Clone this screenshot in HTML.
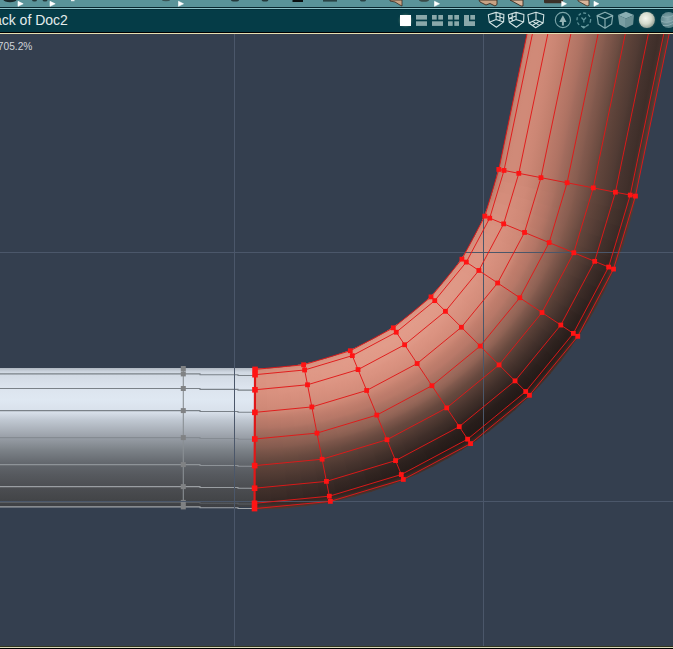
<!DOCTYPE html>
<html><head><meta charset="utf-8">
<style>
html,body{margin:0;padding:0;width:673px;height:649px;overflow:hidden;background:#343f4f;}
svg{position:absolute;left:0;top:0;}
.t{font-family:"Liberation Sans",sans-serif;}
</style></head><body>
<svg width="673" height="649" viewBox="0 0 673 649">
<defs>
<linearGradient id="cyl" x1="0" y1="368" x2="0" y2="507" gradientUnits="userSpaceOnUse">
<stop offset="0" stop-color="#b0b8c2"/>
<stop offset="0.03" stop-color="#d0d8e2"/>
<stop offset="0.14" stop-color="#dce4ee"/>
<stop offset="0.23" stop-color="#dfe8f2"/>
<stop offset="0.317" stop-color="#d8e0ea"/>
<stop offset="0.374" stop-color="#c0c8d2"/>
<stop offset="0.496" stop-color="#9aa0a8"/>
<stop offset="0.59" stop-color="#7c8288"/>
<stop offset="0.69" stop-color="#62666c"/>
<stop offset="0.77" stop-color="#56595e"/>
<stop offset="0.856" stop-color="#4c4e52"/>
<stop offset="0.95" stop-color="#434548"/>
<stop offset="1" stop-color="#3e4044"/>
</linearGradient>
<linearGradient id="g0" gradientUnits="userSpaceOnUse" x1="260.39" y1="369.36" x2="262.86" y2="508.54"><stop offset="0" stop-color="#cf8977"/><stop offset="0.03" stop-color="#d9917f"/><stop offset="0.06" stop-color="#db9381"/><stop offset="0.08" stop-color="#db9381"/><stop offset="0.11" stop-color="#da9280"/><stop offset="0.14" stop-color="#d9917f"/><stop offset="0.17" stop-color="#d8907e"/><stop offset="0.19" stop-color="#d68f7d"/><stop offset="0.22" stop-color="#d48d7b"/><stop offset="0.25" stop-color="#d28b79"/><stop offset="0.28" stop-color="#cf8977"/><stop offset="0.31" stop-color="#cb8674"/><stop offset="0.33" stop-color="#c4816f"/><stop offset="0.36" stop-color="#bd7c6b"/><stop offset="0.39" stop-color="#b77868"/><stop offset="0.42" stop-color="#b07464"/><stop offset="0.44" stop-color="#a76f60"/><stop offset="0.47" stop-color="#9e6a5b"/><stop offset="0.5" stop-color="#946456"/><stop offset="0.53" stop-color="#8d6052"/><stop offset="0.56" stop-color="#855b4f"/><stop offset="0.58" stop-color="#7d574b"/><stop offset="0.61" stop-color="#745146"/><stop offset="0.64" stop-color="#6b4c41"/><stop offset="0.67" stop-color="#63463c"/><stop offset="0.69" stop-color="#5e433a"/><stop offset="0.72" stop-color="#594037"/><stop offset="0.75" stop-color="#543c35"/><stop offset="0.78" stop-color="#4e3932"/><stop offset="0.81" stop-color="#48352f"/><stop offset="0.83" stop-color="#45332d"/><stop offset="0.86" stop-color="#42302b"/><stop offset="0.89" stop-color="#3e2e29"/><stop offset="0.92" stop-color="#3a2b27"/><stop offset="0.94" stop-color="#372925"/><stop offset="0.97" stop-color="#3c2c27"/><stop offset="1" stop-color="#503932"/></linearGradient>
<linearGradient id="g1" gradientUnits="userSpaceOnUse" x1="271.07" y1="368.94" x2="279.54" y2="507.88"><stop offset="0" stop-color="#d18b79"/><stop offset="0.03" stop-color="#da9381"/><stop offset="0.06" stop-color="#dc9482"/><stop offset="0.08" stop-color="#dc9482"/><stop offset="0.11" stop-color="#db9482"/><stop offset="0.14" stop-color="#da9280"/><stop offset="0.17" stop-color="#d9917f"/><stop offset="0.19" stop-color="#d7907e"/><stop offset="0.22" stop-color="#d58e7c"/><stop offset="0.25" stop-color="#d38c7a"/><stop offset="0.28" stop-color="#d08a78"/><stop offset="0.31" stop-color="#cd8775"/><stop offset="0.33" stop-color="#c68270"/><stop offset="0.36" stop-color="#be7c6b"/><stop offset="0.39" stop-color="#b87968"/><stop offset="0.42" stop-color="#b17465"/><stop offset="0.44" stop-color="#a86f60"/><stop offset="0.47" stop-color="#9f6a5b"/><stop offset="0.5" stop-color="#956456"/><stop offset="0.53" stop-color="#8d6053"/><stop offset="0.56" stop-color="#855b4f"/><stop offset="0.58" stop-color="#7d574a"/><stop offset="0.61" stop-color="#745146"/><stop offset="0.64" stop-color="#6a4b41"/><stop offset="0.67" stop-color="#62463c"/><stop offset="0.69" stop-color="#5d433a"/><stop offset="0.72" stop-color="#583f37"/><stop offset="0.75" stop-color="#523c34"/><stop offset="0.78" stop-color="#4d3831"/><stop offset="0.81" stop-color="#47342e"/><stop offset="0.83" stop-color="#44322d"/><stop offset="0.86" stop-color="#402f2a"/><stop offset="0.89" stop-color="#3d2d28"/><stop offset="0.92" stop-color="#392a26"/><stop offset="0.94" stop-color="#352824"/><stop offset="0.97" stop-color="#3b2b26"/><stop offset="1" stop-color="#4f3831"/></linearGradient>
<linearGradient id="g2" gradientUnits="userSpaceOnUse" x1="281.71" y1="368.06" x2="296.18" y2="506.51"><stop offset="0" stop-color="#d38c7a"/><stop offset="0.03" stop-color="#dc9482"/><stop offset="0.06" stop-color="#dd9583"/><stop offset="0.08" stop-color="#dd9583"/><stop offset="0.11" stop-color="#dc9583"/><stop offset="0.14" stop-color="#db9381"/><stop offset="0.17" stop-color="#da9280"/><stop offset="0.19" stop-color="#d8907e"/><stop offset="0.22" stop-color="#d68e7c"/><stop offset="0.25" stop-color="#d38c7a"/><stop offset="0.28" stop-color="#d18a78"/><stop offset="0.31" stop-color="#ce8876"/><stop offset="0.33" stop-color="#c78371"/><stop offset="0.36" stop-color="#bf7d6c"/><stop offset="0.39" stop-color="#b97969"/><stop offset="0.42" stop-color="#b27565"/><stop offset="0.44" stop-color="#a97061"/><stop offset="0.47" stop-color="#9f6b5c"/><stop offset="0.5" stop-color="#956557"/><stop offset="0.53" stop-color="#8e6153"/><stop offset="0.56" stop-color="#865c4f"/><stop offset="0.58" stop-color="#7d574b"/><stop offset="0.61" stop-color="#735145"/><stop offset="0.64" stop-color="#6a4b40"/><stop offset="0.67" stop-color="#62463c"/><stop offset="0.69" stop-color="#5d4239"/><stop offset="0.72" stop-color="#573f36"/><stop offset="0.75" stop-color="#513b34"/><stop offset="0.78" stop-color="#4b3730"/><stop offset="0.81" stop-color="#46332e"/><stop offset="0.83" stop-color="#42312c"/><stop offset="0.86" stop-color="#3f2e29"/><stop offset="0.89" stop-color="#3b2b27"/><stop offset="0.92" stop-color="#372925"/><stop offset="0.94" stop-color="#342623"/><stop offset="0.97" stop-color="#392925"/><stop offset="1" stop-color="#4e3731"/></linearGradient>
<linearGradient id="g3" gradientUnits="userSpaceOnUse" x1="292.31" y1="366.72" x2="312.74" y2="504.41"><stop offset="0" stop-color="#d48d7b"/><stop offset="0.03" stop-color="#dd9583"/><stop offset="0.06" stop-color="#de9785"/><stop offset="0.08" stop-color="#de9684"/><stop offset="0.11" stop-color="#dd9684"/><stop offset="0.14" stop-color="#dc9482"/><stop offset="0.17" stop-color="#db9381"/><stop offset="0.19" stop-color="#d9917f"/><stop offset="0.22" stop-color="#d78f7d"/><stop offset="0.25" stop-color="#d48d7b"/><stop offset="0.28" stop-color="#d18b79"/><stop offset="0.31" stop-color="#cf8876"/><stop offset="0.33" stop-color="#c88372"/><stop offset="0.36" stop-color="#c07e6d"/><stop offset="0.39" stop-color="#ba7a69"/><stop offset="0.42" stop-color="#b37666"/><stop offset="0.44" stop-color="#aa7061"/><stop offset="0.47" stop-color="#a06b5c"/><stop offset="0.5" stop-color="#966657"/><stop offset="0.53" stop-color="#8f6154"/><stop offset="0.56" stop-color="#865c4f"/><stop offset="0.58" stop-color="#7d574b"/><stop offset="0.61" stop-color="#735145"/><stop offset="0.64" stop-color="#694a40"/><stop offset="0.67" stop-color="#61453c"/><stop offset="0.69" stop-color="#5c4239"/><stop offset="0.72" stop-color="#563e36"/><stop offset="0.75" stop-color="#503a33"/><stop offset="0.78" stop-color="#4a3630"/><stop offset="0.81" stop-color="#44322d"/><stop offset="0.83" stop-color="#41302b"/><stop offset="0.86" stop-color="#3d2d28"/><stop offset="0.89" stop-color="#392a26"/><stop offset="0.92" stop-color="#352724"/><stop offset="0.94" stop-color="#322521"/><stop offset="0.97" stop-color="#372824"/><stop offset="1" stop-color="#4c3630"/></linearGradient>
<linearGradient id="g4" gradientUnits="userSpaceOnUse" x1="302.84" y1="364.93" x2="329.19" y2="501.61"><stop offset="0" stop-color="#d58e7c"/><stop offset="0.03" stop-color="#dd9684"/><stop offset="0.06" stop-color="#de9886"/><stop offset="0.08" stop-color="#de9785"/><stop offset="0.11" stop-color="#de9785"/><stop offset="0.14" stop-color="#dd9583"/><stop offset="0.17" stop-color="#db9482"/><stop offset="0.19" stop-color="#da9280"/><stop offset="0.22" stop-color="#d7907e"/><stop offset="0.25" stop-color="#d58e7c"/><stop offset="0.28" stop-color="#d28b79"/><stop offset="0.31" stop-color="#cf8977"/><stop offset="0.33" stop-color="#c98473"/><stop offset="0.36" stop-color="#c17e6d"/><stop offset="0.39" stop-color="#bb7a69"/><stop offset="0.42" stop-color="#b47666"/><stop offset="0.44" stop-color="#ab7162"/><stop offset="0.47" stop-color="#a16c5d"/><stop offset="0.5" stop-color="#976658"/><stop offset="0.53" stop-color="#906254"/><stop offset="0.56" stop-color="#875d50"/><stop offset="0.58" stop-color="#7d574b"/><stop offset="0.61" stop-color="#735045"/><stop offset="0.64" stop-color="#684a3f"/><stop offset="0.67" stop-color="#61453b"/><stop offset="0.69" stop-color="#5b4139"/><stop offset="0.72" stop-color="#553d35"/><stop offset="0.75" stop-color="#4f3932"/><stop offset="0.78" stop-color="#48352f"/><stop offset="0.81" stop-color="#43312c"/><stop offset="0.83" stop-color="#3f2f2a"/><stop offset="0.86" stop-color="#3b2c27"/><stop offset="0.89" stop-color="#372825"/><stop offset="0.92" stop-color="#332622"/><stop offset="0.94" stop-color="#302320"/><stop offset="0.97" stop-color="#352723"/><stop offset="1" stop-color="#4b352f"/></linearGradient>
<linearGradient id="g5" gradientUnits="userSpaceOnUse" x1="313.28" y1="362.68" x2="345.51" y2="498.09"><stop offset="0" stop-color="#d68f7d"/><stop offset="0.03" stop-color="#de9785"/><stop offset="0.06" stop-color="#df9987"/><stop offset="0.08" stop-color="#df9886"/><stop offset="0.11" stop-color="#de9785"/><stop offset="0.14" stop-color="#dd9684"/><stop offset="0.17" stop-color="#dc9482"/><stop offset="0.19" stop-color="#da9280"/><stop offset="0.22" stop-color="#d8907e"/><stop offset="0.25" stop-color="#d58e7c"/><stop offset="0.28" stop-color="#d28c7a"/><stop offset="0.31" stop-color="#cf8977"/><stop offset="0.33" stop-color="#ca8573"/><stop offset="0.36" stop-color="#c27f6e"/><stop offset="0.39" stop-color="#bb7a6a"/><stop offset="0.42" stop-color="#b57767"/><stop offset="0.44" stop-color="#ac7262"/><stop offset="0.47" stop-color="#a26c5d"/><stop offset="0.5" stop-color="#986759"/><stop offset="0.53" stop-color="#916355"/><stop offset="0.56" stop-color="#875d50"/><stop offset="0.58" stop-color="#7d574b"/><stop offset="0.61" stop-color="#735045"/><stop offset="0.64" stop-color="#684a3f"/><stop offset="0.67" stop-color="#60453b"/><stop offset="0.69" stop-color="#5b4138"/><stop offset="0.72" stop-color="#543d35"/><stop offset="0.75" stop-color="#4d3831"/><stop offset="0.78" stop-color="#47342e"/><stop offset="0.81" stop-color="#42302b"/><stop offset="0.83" stop-color="#3d2d28"/><stop offset="0.86" stop-color="#392a26"/><stop offset="0.89" stop-color="#342723"/><stop offset="0.92" stop-color="#312421"/><stop offset="0.94" stop-color="#2e221f"/><stop offset="0.97" stop-color="#332521"/><stop offset="1" stop-color="#4a342e"/></linearGradient>
<linearGradient id="g6" gradientUnits="userSpaceOnUse" x1="323.62" y1="359.98" x2="361.66" y2="493.88"><stop offset="0" stop-color="#d7907e"/><stop offset="0.03" stop-color="#df9886"/><stop offset="0.06" stop-color="#e09987"/><stop offset="0.08" stop-color="#e09987"/><stop offset="0.11" stop-color="#df9886"/><stop offset="0.14" stop-color="#de9785"/><stop offset="0.17" stop-color="#dc9583"/><stop offset="0.19" stop-color="#db9381"/><stop offset="0.22" stop-color="#d8917f"/><stop offset="0.25" stop-color="#d68e7c"/><stop offset="0.28" stop-color="#d38c7a"/><stop offset="0.31" stop-color="#d08a78"/><stop offset="0.33" stop-color="#cb8674"/><stop offset="0.36" stop-color="#c37f6e"/><stop offset="0.39" stop-color="#bc7b6a"/><stop offset="0.42" stop-color="#b67767"/><stop offset="0.44" stop-color="#ad7263"/><stop offset="0.47" stop-color="#a36d5e"/><stop offset="0.5" stop-color="#9a6859"/><stop offset="0.53" stop-color="#926456"/><stop offset="0.56" stop-color="#885e50"/><stop offset="0.58" stop-color="#7e574b"/><stop offset="0.61" stop-color="#735045"/><stop offset="0.64" stop-color="#67493f"/><stop offset="0.67" stop-color="#60443b"/><stop offset="0.69" stop-color="#5a4138"/><stop offset="0.72" stop-color="#533c34"/><stop offset="0.75" stop-color="#4c3731"/><stop offset="0.78" stop-color="#45332d"/><stop offset="0.81" stop-color="#402f2a"/><stop offset="0.83" stop-color="#3c2c27"/><stop offset="0.86" stop-color="#372925"/><stop offset="0.89" stop-color="#322522"/><stop offset="0.92" stop-color="#2f231f"/><stop offset="0.94" stop-color="#2c211e"/><stop offset="0.97" stop-color="#322420"/><stop offset="1" stop-color="#48332d"/></linearGradient>
<linearGradient id="g7" gradientUnits="userSpaceOnUse" x1="333.83" y1="356.84" x2="377.62" y2="488.97"><stop offset="0" stop-color="#d8907e"/><stop offset="0.03" stop-color="#e09987"/><stop offset="0.06" stop-color="#e19a88"/><stop offset="0.08" stop-color="#e09a88"/><stop offset="0.11" stop-color="#df9987"/><stop offset="0.14" stop-color="#de9785"/><stop offset="0.17" stop-color="#dd9583"/><stop offset="0.19" stop-color="#db9381"/><stop offset="0.22" stop-color="#d9917f"/><stop offset="0.25" stop-color="#d68f7d"/><stop offset="0.28" stop-color="#d38c7a"/><stop offset="0.31" stop-color="#d08a78"/><stop offset="0.33" stop-color="#cb8674"/><stop offset="0.36" stop-color="#c3806f"/><stop offset="0.39" stop-color="#bc7b6a"/><stop offset="0.42" stop-color="#b77867"/><stop offset="0.44" stop-color="#ae7363"/><stop offset="0.47" stop-color="#a46e5f"/><stop offset="0.5" stop-color="#9b685a"/><stop offset="0.53" stop-color="#936456"/><stop offset="0.56" stop-color="#895e51"/><stop offset="0.58" stop-color="#7e574b"/><stop offset="0.61" stop-color="#735045"/><stop offset="0.64" stop-color="#67493f"/><stop offset="0.67" stop-color="#60443b"/><stop offset="0.69" stop-color="#5a4038"/><stop offset="0.72" stop-color="#523b34"/><stop offset="0.75" stop-color="#4b3730"/><stop offset="0.78" stop-color="#44322c"/><stop offset="0.81" stop-color="#3f2e29"/><stop offset="0.83" stop-color="#3a2b26"/><stop offset="0.86" stop-color="#352723"/><stop offset="0.89" stop-color="#302420"/><stop offset="0.92" stop-color="#2d211e"/><stop offset="0.94" stop-color="#2a1f1c"/><stop offset="0.97" stop-color="#30231f"/><stop offset="1" stop-color="#47322c"/></linearGradient>
<linearGradient id="g8" gradientUnits="userSpaceOnUse" x1="343.89" y1="353.26" x2="393.34" y2="483.38"><stop offset="0" stop-color="#d9917f"/><stop offset="0.03" stop-color="#e09a88"/><stop offset="0.06" stop-color="#e19b89"/><stop offset="0.08" stop-color="#e19a88"/><stop offset="0.11" stop-color="#e09987"/><stop offset="0.14" stop-color="#df9886"/><stop offset="0.17" stop-color="#dd9684"/><stop offset="0.19" stop-color="#db9482"/><stop offset="0.22" stop-color="#d9917f"/><stop offset="0.25" stop-color="#d68f7d"/><stop offset="0.28" stop-color="#d48d7b"/><stop offset="0.31" stop-color="#d08a78"/><stop offset="0.33" stop-color="#cc8675"/><stop offset="0.36" stop-color="#c4806f"/><stop offset="0.39" stop-color="#bc7b6a"/><stop offset="0.42" stop-color="#b77868"/><stop offset="0.44" stop-color="#af7364"/><stop offset="0.47" stop-color="#a56e5f"/><stop offset="0.5" stop-color="#9c695a"/><stop offset="0.53" stop-color="#946557"/><stop offset="0.56" stop-color="#895f51"/><stop offset="0.58" stop-color="#7e584b"/><stop offset="0.61" stop-color="#725045"/><stop offset="0.64" stop-color="#67493f"/><stop offset="0.67" stop-color="#60443b"/><stop offset="0.69" stop-color="#594037"/><stop offset="0.72" stop-color="#513b33"/><stop offset="0.75" stop-color="#4a362f"/><stop offset="0.78" stop-color="#42312b"/><stop offset="0.81" stop-color="#3d2d28"/><stop offset="0.83" stop-color="#382925"/><stop offset="0.86" stop-color="#332622"/><stop offset="0.89" stop-color="#2e221f"/><stop offset="0.92" stop-color="#2b201d"/><stop offset="0.94" stop-color="#291e1b"/><stop offset="0.97" stop-color="#2f221e"/><stop offset="1" stop-color="#46312b"/></linearGradient>
<linearGradient id="g9" gradientUnits="userSpaceOnUse" x1="353.79" y1="349.25" x2="408.82" y2="477.12"><stop offset="0" stop-color="#d99280"/><stop offset="0.03" stop-color="#e19a88"/><stop offset="0.06" stop-color="#e19b89"/><stop offset="0.08" stop-color="#e19b89"/><stop offset="0.11" stop-color="#e09a88"/><stop offset="0.14" stop-color="#df9886"/><stop offset="0.17" stop-color="#dd9684"/><stop offset="0.19" stop-color="#dc9482"/><stop offset="0.22" stop-color="#da9280"/><stop offset="0.25" stop-color="#d78f7d"/><stop offset="0.28" stop-color="#d48d7b"/><stop offset="0.31" stop-color="#d18a78"/><stop offset="0.33" stop-color="#cc8775"/><stop offset="0.36" stop-color="#c4806f"/><stop offset="0.39" stop-color="#bd7b6a"/><stop offset="0.42" stop-color="#b87868"/><stop offset="0.44" stop-color="#af7464"/><stop offset="0.47" stop-color="#a66f60"/><stop offset="0.5" stop-color="#9d6a5b"/><stop offset="0.53" stop-color="#956658"/><stop offset="0.56" stop-color="#8a5f52"/><stop offset="0.58" stop-color="#7f584c"/><stop offset="0.61" stop-color="#735045"/><stop offset="0.64" stop-color="#66493e"/><stop offset="0.67" stop-color="#5f443b"/><stop offset="0.69" stop-color="#594037"/><stop offset="0.72" stop-color="#513a33"/><stop offset="0.75" stop-color="#49352f"/><stop offset="0.78" stop-color="#41302a"/><stop offset="0.81" stop-color="#3c2c27"/><stop offset="0.83" stop-color="#372824"/><stop offset="0.86" stop-color="#322521"/><stop offset="0.89" stop-color="#2c211e"/><stop offset="0.92" stop-color="#291f1c"/><stop offset="0.94" stop-color="#271d1a"/><stop offset="0.97" stop-color="#2e211e"/><stop offset="1" stop-color="#44302a"/></linearGradient>
<linearGradient id="g10" gradientUnits="userSpaceOnUse" x1="363.51" y1="344.82" x2="424" y2="470.19"><stop offset="0" stop-color="#da9280"/><stop offset="0.03" stop-color="#e19b89"/><stop offset="0.06" stop-color="#e29c8a"/><stop offset="0.08" stop-color="#e19b89"/><stop offset="0.11" stop-color="#e09a88"/><stop offset="0.14" stop-color="#df9987"/><stop offset="0.17" stop-color="#de9785"/><stop offset="0.19" stop-color="#dc9482"/><stop offset="0.22" stop-color="#da9280"/><stop offset="0.25" stop-color="#d78f7d"/><stop offset="0.28" stop-color="#d48d7b"/><stop offset="0.31" stop-color="#d18a78"/><stop offset="0.33" stop-color="#cd8775"/><stop offset="0.36" stop-color="#c4816f"/><stop offset="0.39" stop-color="#bd7b6b"/><stop offset="0.42" stop-color="#b87968"/><stop offset="0.44" stop-color="#b07464"/><stop offset="0.47" stop-color="#a77060"/><stop offset="0.5" stop-color="#9e6a5c"/><stop offset="0.53" stop-color="#966758"/><stop offset="0.56" stop-color="#8b5f52"/><stop offset="0.58" stop-color="#7f584c"/><stop offset="0.61" stop-color="#735045"/><stop offset="0.64" stop-color="#66483e"/><stop offset="0.67" stop-color="#5f443b"/><stop offset="0.69" stop-color="#583f37"/><stop offset="0.72" stop-color="#503a32"/><stop offset="0.75" stop-color="#48342e"/><stop offset="0.78" stop-color="#402f2a"/><stop offset="0.81" stop-color="#3b2b26"/><stop offset="0.83" stop-color="#352723"/><stop offset="0.86" stop-color="#302420"/><stop offset="0.89" stop-color="#2b201d"/><stop offset="0.92" stop-color="#281e1b"/><stop offset="0.94" stop-color="#261c19"/><stop offset="0.97" stop-color="#2d201d"/><stop offset="1" stop-color="#432f2a"/></linearGradient>
<linearGradient id="g11" gradientUnits="userSpaceOnUse" x1="373.03" y1="339.97" x2="438.88" y2="462.61"><stop offset="0" stop-color="#da9280"/><stop offset="0.03" stop-color="#e19b89"/><stop offset="0.06" stop-color="#e29c8a"/><stop offset="0.08" stop-color="#e29b89"/><stop offset="0.11" stop-color="#e19a88"/><stop offset="0.14" stop-color="#df9987"/><stop offset="0.17" stop-color="#de9785"/><stop offset="0.19" stop-color="#dc9482"/><stop offset="0.22" stop-color="#da9280"/><stop offset="0.25" stop-color="#d7907e"/><stop offset="0.28" stop-color="#d48d7b"/><stop offset="0.31" stop-color="#d18a78"/><stop offset="0.33" stop-color="#cd8775"/><stop offset="0.36" stop-color="#c4816f"/><stop offset="0.39" stop-color="#bd7c6b"/><stop offset="0.42" stop-color="#b87968"/><stop offset="0.44" stop-color="#b17565"/><stop offset="0.47" stop-color="#a87061"/><stop offset="0.5" stop-color="#9e6b5c"/><stop offset="0.53" stop-color="#976759"/><stop offset="0.56" stop-color="#8b6052"/><stop offset="0.58" stop-color="#7f584c"/><stop offset="0.61" stop-color="#735045"/><stop offset="0.64" stop-color="#66483e"/><stop offset="0.67" stop-color="#5f443b"/><stop offset="0.69" stop-color="#583f37"/><stop offset="0.72" stop-color="#4f3932"/><stop offset="0.75" stop-color="#47342e"/><stop offset="0.78" stop-color="#3f2e29"/><stop offset="0.81" stop-color="#3a2a26"/><stop offset="0.83" stop-color="#342723"/><stop offset="0.86" stop-color="#2f231f"/><stop offset="0.89" stop-color="#2a1f1c"/><stop offset="0.92" stop-color="#271d1a"/><stop offset="0.94" stop-color="#251b19"/><stop offset="0.97" stop-color="#2c1f1c"/><stop offset="1" stop-color="#422f29"/></linearGradient>
<linearGradient id="g12" gradientUnits="userSpaceOnUse" x1="382.33" y1="334.71" x2="453.41" y2="454.4"><stop offset="0" stop-color="#da9280"/><stop offset="0.03" stop-color="#e19b89"/><stop offset="0.06" stop-color="#e29c8a"/><stop offset="0.08" stop-color="#e29c8a"/><stop offset="0.11" stop-color="#e19a88"/><stop offset="0.14" stop-color="#df9987"/><stop offset="0.17" stop-color="#de9785"/><stop offset="0.19" stop-color="#dc9583"/><stop offset="0.22" stop-color="#da9280"/><stop offset="0.25" stop-color="#d7907e"/><stop offset="0.28" stop-color="#d48d7b"/><stop offset="0.31" stop-color="#d18a78"/><stop offset="0.33" stop-color="#cd8775"/><stop offset="0.36" stop-color="#c58170"/><stop offset="0.39" stop-color="#bd7c6b"/><stop offset="0.42" stop-color="#b97969"/><stop offset="0.44" stop-color="#b17565"/><stop offset="0.47" stop-color="#a87061"/><stop offset="0.5" stop-color="#9f6b5c"/><stop offset="0.53" stop-color="#986859"/><stop offset="0.56" stop-color="#8c6053"/><stop offset="0.58" stop-color="#80594c"/><stop offset="0.61" stop-color="#735145"/><stop offset="0.64" stop-color="#66483e"/><stop offset="0.67" stop-color="#5f443b"/><stop offset="0.69" stop-color="#583f37"/><stop offset="0.72" stop-color="#4f3932"/><stop offset="0.75" stop-color="#47342d"/><stop offset="0.78" stop-color="#3e2e29"/><stop offset="0.81" stop-color="#392a25"/><stop offset="0.83" stop-color="#332622"/><stop offset="0.86" stop-color="#2e221e"/><stop offset="0.89" stop-color="#291e1b"/><stop offset="0.92" stop-color="#261c19"/><stop offset="0.94" stop-color="#241a18"/><stop offset="0.97" stop-color="#2b1f1c"/><stop offset="1" stop-color="#422e29"/></linearGradient>
<linearGradient id="g13" gradientUnits="userSpaceOnUse" x1="391.39" y1="329.06" x2="467.57" y2="445.57"><stop offset="0" stop-color="#da9280"/><stop offset="0.03" stop-color="#e19b89"/><stop offset="0.06" stop-color="#e29c8a"/><stop offset="0.08" stop-color="#e29c8a"/><stop offset="0.11" stop-color="#e19a88"/><stop offset="0.14" stop-color="#df9987"/><stop offset="0.17" stop-color="#de9785"/><stop offset="0.19" stop-color="#dc9583"/><stop offset="0.22" stop-color="#da9280"/><stop offset="0.25" stop-color="#d7907e"/><stop offset="0.28" stop-color="#d48d7b"/><stop offset="0.31" stop-color="#d18a78"/><stop offset="0.33" stop-color="#cd8775"/><stop offset="0.36" stop-color="#c58170"/><stop offset="0.39" stop-color="#bd7c6b"/><stop offset="0.42" stop-color="#b97969"/><stop offset="0.44" stop-color="#b17565"/><stop offset="0.47" stop-color="#a97161"/><stop offset="0.5" stop-color="#9f6c5d"/><stop offset="0.53" stop-color="#996859"/><stop offset="0.56" stop-color="#8c6153"/><stop offset="0.58" stop-color="#80594c"/><stop offset="0.61" stop-color="#735145"/><stop offset="0.64" stop-color="#66483e"/><stop offset="0.67" stop-color="#5f443b"/><stop offset="0.69" stop-color="#583f37"/><stop offset="0.72" stop-color="#4f3932"/><stop offset="0.75" stop-color="#46332d"/><stop offset="0.78" stop-color="#3e2e29"/><stop offset="0.81" stop-color="#382a25"/><stop offset="0.83" stop-color="#332522"/><stop offset="0.86" stop-color="#2d211e"/><stop offset="0.89" stop-color="#281e1b"/><stop offset="0.92" stop-color="#251c19"/><stop offset="0.94" stop-color="#231a17"/><stop offset="0.97" stop-color="#2a1e1b"/><stop offset="1" stop-color="#412e28"/></linearGradient>
<linearGradient id="g14" gradientUnits="userSpaceOnUse" x1="400.21" y1="323.03" x2="481.34" y2="436.13"><stop offset="0" stop-color="#da9280"/><stop offset="0.03" stop-color="#e19b89"/><stop offset="0.06" stop-color="#e29c8a"/><stop offset="0.08" stop-color="#e29b89"/><stop offset="0.11" stop-color="#e19a88"/><stop offset="0.14" stop-color="#df9987"/><stop offset="0.17" stop-color="#de9785"/><stop offset="0.19" stop-color="#dc9482"/><stop offset="0.22" stop-color="#da9280"/><stop offset="0.25" stop-color="#d7907e"/><stop offset="0.28" stop-color="#d48d7b"/><stop offset="0.31" stop-color="#d18a78"/><stop offset="0.33" stop-color="#cd8775"/><stop offset="0.36" stop-color="#c4816f"/><stop offset="0.39" stop-color="#bd7c6b"/><stop offset="0.42" stop-color="#b97969"/><stop offset="0.44" stop-color="#b17565"/><stop offset="0.47" stop-color="#a97161"/><stop offset="0.5" stop-color="#a06c5d"/><stop offset="0.53" stop-color="#99685a"/><stop offset="0.56" stop-color="#8d6153"/><stop offset="0.58" stop-color="#80594d"/><stop offset="0.61" stop-color="#735145"/><stop offset="0.64" stop-color="#66493e"/><stop offset="0.67" stop-color="#5f443b"/><stop offset="0.69" stop-color="#583f37"/><stop offset="0.72" stop-color="#4f3932"/><stop offset="0.75" stop-color="#46332d"/><stop offset="0.78" stop-color="#3e2e28"/><stop offset="0.81" stop-color="#382925"/><stop offset="0.83" stop-color="#322521"/><stop offset="0.86" stop-color="#2d211e"/><stop offset="0.89" stop-color="#271d1a"/><stop offset="0.92" stop-color="#251b19"/><stop offset="0.94" stop-color="#231a17"/><stop offset="0.97" stop-color="#2a1e1b"/><stop offset="1" stop-color="#412d28"/></linearGradient>
<linearGradient id="g15" gradientUnits="userSpaceOnUse" x1="408.75" y1="316.61" x2="494.69" y2="426.11"><stop offset="0" stop-color="#da9280"/><stop offset="0.03" stop-color="#e19b89"/><stop offset="0.06" stop-color="#e29c8a"/><stop offset="0.08" stop-color="#e19b89"/><stop offset="0.11" stop-color="#e19a88"/><stop offset="0.14" stop-color="#df9987"/><stop offset="0.17" stop-color="#de9785"/><stop offset="0.19" stop-color="#dc9482"/><stop offset="0.22" stop-color="#da9280"/><stop offset="0.25" stop-color="#d78f7d"/><stop offset="0.28" stop-color="#d48d7b"/><stop offset="0.31" stop-color="#d18a78"/><stop offset="0.33" stop-color="#cd8775"/><stop offset="0.36" stop-color="#c4816f"/><stop offset="0.39" stop-color="#bd7c6b"/><stop offset="0.42" stop-color="#b97969"/><stop offset="0.44" stop-color="#b17565"/><stop offset="0.47" stop-color="#a97161"/><stop offset="0.5" stop-color="#a06c5d"/><stop offset="0.53" stop-color="#99685a"/><stop offset="0.56" stop-color="#8d6153"/><stop offset="0.58" stop-color="#80594d"/><stop offset="0.61" stop-color="#735146"/><stop offset="0.64" stop-color="#67493e"/><stop offset="0.67" stop-color="#5f443b"/><stop offset="0.69" stop-color="#583f37"/><stop offset="0.72" stop-color="#4f3932"/><stop offset="0.75" stop-color="#46332d"/><stop offset="0.78" stop-color="#3e2e28"/><stop offset="0.81" stop-color="#382925"/><stop offset="0.83" stop-color="#322521"/><stop offset="0.86" stop-color="#2d211e"/><stop offset="0.89" stop-color="#271d1a"/><stop offset="0.92" stop-color="#251b19"/><stop offset="0.94" stop-color="#221917"/><stop offset="0.97" stop-color="#2a1e1b"/><stop offset="1" stop-color="#412d28"/></linearGradient>
<linearGradient id="g16" gradientUnits="userSpaceOnUse" x1="417.01" y1="309.84" x2="507.6" y2="415.53"><stop offset="0" stop-color="#d99280"/><stop offset="0.03" stop-color="#e19a88"/><stop offset="0.06" stop-color="#e19b89"/><stop offset="0.08" stop-color="#e19b89"/><stop offset="0.11" stop-color="#e09a88"/><stop offset="0.14" stop-color="#df9886"/><stop offset="0.17" stop-color="#dd9684"/><stop offset="0.19" stop-color="#dc9482"/><stop offset="0.22" stop-color="#da9280"/><stop offset="0.25" stop-color="#d78f7d"/><stop offset="0.28" stop-color="#d48d7b"/><stop offset="0.31" stop-color="#d18a78"/><stop offset="0.33" stop-color="#cc8775"/><stop offset="0.36" stop-color="#c4816f"/><stop offset="0.39" stop-color="#bd7c6b"/><stop offset="0.42" stop-color="#b97969"/><stop offset="0.44" stop-color="#b17565"/><stop offset="0.47" stop-color="#a97161"/><stop offset="0.5" stop-color="#a06c5d"/><stop offset="0.53" stop-color="#99685a"/><stop offset="0.56" stop-color="#8d6153"/><stop offset="0.58" stop-color="#81594d"/><stop offset="0.61" stop-color="#745146"/><stop offset="0.64" stop-color="#67493f"/><stop offset="0.67" stop-color="#5f443b"/><stop offset="0.69" stop-color="#583f37"/><stop offset="0.72" stop-color="#4f3932"/><stop offset="0.75" stop-color="#47332d"/><stop offset="0.78" stop-color="#3e2e29"/><stop offset="0.81" stop-color="#382925"/><stop offset="0.83" stop-color="#332521"/><stop offset="0.86" stop-color="#2d211e"/><stop offset="0.89" stop-color="#271d1a"/><stop offset="0.92" stop-color="#251b19"/><stop offset="0.94" stop-color="#231a17"/><stop offset="0.97" stop-color="#2a1e1b"/><stop offset="1" stop-color="#412d28"/></linearGradient>
<linearGradient id="g17" gradientUnits="userSpaceOnUse" x1="424.97" y1="302.71" x2="520.04" y2="404.39"><stop offset="0" stop-color="#d9917f"/><stop offset="0.03" stop-color="#e09a88"/><stop offset="0.06" stop-color="#e19b89"/><stop offset="0.08" stop-color="#e19a88"/><stop offset="0.11" stop-color="#e09987"/><stop offset="0.14" stop-color="#df9886"/><stop offset="0.17" stop-color="#dd9684"/><stop offset="0.19" stop-color="#db9482"/><stop offset="0.22" stop-color="#d9917f"/><stop offset="0.25" stop-color="#d68f7d"/><stop offset="0.28" stop-color="#d48d7b"/><stop offset="0.31" stop-color="#d08a78"/><stop offset="0.33" stop-color="#cc8775"/><stop offset="0.36" stop-color="#c4806f"/><stop offset="0.39" stop-color="#bd7c6b"/><stop offset="0.42" stop-color="#b97969"/><stop offset="0.44" stop-color="#b17565"/><stop offset="0.47" stop-color="#a97161"/><stop offset="0.5" stop-color="#a06c5d"/><stop offset="0.53" stop-color="#99685a"/><stop offset="0.56" stop-color="#8d6153"/><stop offset="0.58" stop-color="#81594d"/><stop offset="0.61" stop-color="#745146"/><stop offset="0.64" stop-color="#67493f"/><stop offset="0.67" stop-color="#60443b"/><stop offset="0.69" stop-color="#594037"/><stop offset="0.72" stop-color="#503a32"/><stop offset="0.75" stop-color="#47342e"/><stop offset="0.78" stop-color="#3f2e29"/><stop offset="0.81" stop-color="#392a25"/><stop offset="0.83" stop-color="#332622"/><stop offset="0.86" stop-color="#2d221e"/><stop offset="0.89" stop-color="#281d1b"/><stop offset="0.92" stop-color="#251b19"/><stop offset="0.94" stop-color="#231a17"/><stop offset="0.97" stop-color="#2a1e1b"/><stop offset="1" stop-color="#412e28"/></linearGradient>
<linearGradient id="g18" gradientUnits="userSpaceOnUse" x1="432.61" y1="295.25" x2="531.98" y2="392.73"><stop offset="0" stop-color="#d8907e"/><stop offset="0.03" stop-color="#e09987"/><stop offset="0.06" stop-color="#e19a88"/><stop offset="0.08" stop-color="#e09a88"/><stop offset="0.11" stop-color="#df9987"/><stop offset="0.14" stop-color="#de9785"/><stop offset="0.17" stop-color="#dd9583"/><stop offset="0.19" stop-color="#db9381"/><stop offset="0.22" stop-color="#d9917f"/><stop offset="0.25" stop-color="#d68f7d"/><stop offset="0.28" stop-color="#d38c7a"/><stop offset="0.31" stop-color="#d08a78"/><stop offset="0.33" stop-color="#cb8674"/><stop offset="0.36" stop-color="#c3806f"/><stop offset="0.39" stop-color="#bd7b6b"/><stop offset="0.42" stop-color="#b87969"/><stop offset="0.44" stop-color="#b17565"/><stop offset="0.47" stop-color="#a87061"/><stop offset="0.5" stop-color="#9f6c5d"/><stop offset="0.53" stop-color="#99685a"/><stop offset="0.56" stop-color="#8d6153"/><stop offset="0.58" stop-color="#81594d"/><stop offset="0.61" stop-color="#745146"/><stop offset="0.64" stop-color="#68493f"/><stop offset="0.67" stop-color="#60443b"/><stop offset="0.69" stop-color="#594037"/><stop offset="0.72" stop-color="#503a33"/><stop offset="0.75" stop-color="#48342e"/><stop offset="0.78" stop-color="#402f29"/><stop offset="0.81" stop-color="#3a2a26"/><stop offset="0.83" stop-color="#342622"/><stop offset="0.86" stop-color="#2e221f"/><stop offset="0.89" stop-color="#291e1b"/><stop offset="0.92" stop-color="#261c19"/><stop offset="0.94" stop-color="#241a18"/><stop offset="0.97" stop-color="#2a1f1b"/><stop offset="1" stop-color="#412e28"/></linearGradient>
<linearGradient id="g19" gradientUnits="userSpaceOnUse" x1="439.92" y1="287.47" x2="543.41" y2="380.56"><stop offset="0" stop-color="#d7907e"/><stop offset="0.03" stop-color="#df9886"/><stop offset="0.06" stop-color="#e09987"/><stop offset="0.08" stop-color="#e09987"/><stop offset="0.11" stop-color="#df9886"/><stop offset="0.14" stop-color="#de9785"/><stop offset="0.17" stop-color="#dc9583"/><stop offset="0.19" stop-color="#db9381"/><stop offset="0.22" stop-color="#d8917f"/><stop offset="0.25" stop-color="#d68e7c"/><stop offset="0.28" stop-color="#d38c7a"/><stop offset="0.31" stop-color="#d08a78"/><stop offset="0.33" stop-color="#cb8674"/><stop offset="0.36" stop-color="#c37f6e"/><stop offset="0.39" stop-color="#bd7b6a"/><stop offset="0.42" stop-color="#b87968"/><stop offset="0.44" stop-color="#b07565"/><stop offset="0.47" stop-color="#a87061"/><stop offset="0.5" stop-color="#9f6b5c"/><stop offset="0.53" stop-color="#986859"/><stop offset="0.56" stop-color="#8d6153"/><stop offset="0.58" stop-color="#815a4d"/><stop offset="0.61" stop-color="#755246"/><stop offset="0.64" stop-color="#684a3f"/><stop offset="0.67" stop-color="#60443b"/><stop offset="0.69" stop-color="#5a4038"/><stop offset="0.72" stop-color="#513b33"/><stop offset="0.75" stop-color="#49352f"/><stop offset="0.78" stop-color="#41302a"/><stop offset="0.81" stop-color="#3b2b26"/><stop offset="0.83" stop-color="#352723"/><stop offset="0.86" stop-color="#302320"/><stop offset="0.89" stop-color="#2a1f1c"/><stop offset="0.92" stop-color="#271d1a"/><stop offset="0.94" stop-color="#251b19"/><stop offset="0.97" stop-color="#2b1f1c"/><stop offset="1" stop-color="#422e29"/></linearGradient>
<linearGradient id="g20" gradientUnits="userSpaceOnUse" x1="446.9" y1="279.37" x2="554.3" y2="367.92"><stop offset="0" stop-color="#d68f7d"/><stop offset="0.03" stop-color="#de9785"/><stop offset="0.06" stop-color="#df9987"/><stop offset="0.08" stop-color="#df9886"/><stop offset="0.11" stop-color="#de9886"/><stop offset="0.14" stop-color="#dd9684"/><stop offset="0.17" stop-color="#dc9482"/><stop offset="0.19" stop-color="#da9280"/><stop offset="0.22" stop-color="#d8907e"/><stop offset="0.25" stop-color="#d58e7c"/><stop offset="0.28" stop-color="#d28c7a"/><stop offset="0.31" stop-color="#cf8977"/><stop offset="0.33" stop-color="#ca8573"/><stop offset="0.36" stop-color="#c27f6e"/><stop offset="0.39" stop-color="#bc7b6a"/><stop offset="0.42" stop-color="#b77868"/><stop offset="0.44" stop-color="#b07464"/><stop offset="0.47" stop-color="#a77060"/><stop offset="0.5" stop-color="#9e6b5c"/><stop offset="0.53" stop-color="#986759"/><stop offset="0.56" stop-color="#8c6153"/><stop offset="0.58" stop-color="#815a4d"/><stop offset="0.61" stop-color="#755246"/><stop offset="0.64" stop-color="#694a40"/><stop offset="0.67" stop-color="#60453b"/><stop offset="0.69" stop-color="#5a4138"/><stop offset="0.72" stop-color="#523b34"/><stop offset="0.75" stop-color="#4a362f"/><stop offset="0.78" stop-color="#42302b"/><stop offset="0.81" stop-color="#3c2c27"/><stop offset="0.83" stop-color="#362824"/><stop offset="0.86" stop-color="#312421"/><stop offset="0.89" stop-color="#2c201d"/><stop offset="0.92" stop-color="#281e1b"/><stop offset="0.94" stop-color="#261c19"/><stop offset="0.97" stop-color="#2c201c"/><stop offset="1" stop-color="#432f29"/></linearGradient>
<linearGradient id="g21" gradientUnits="userSpaceOnUse" x1="453.51" y1="270.98" x2="564.64" y2="354.81"><stop offset="0" stop-color="#d58e7c"/><stop offset="0.03" stop-color="#de9684"/><stop offset="0.06" stop-color="#df9886"/><stop offset="0.08" stop-color="#de9886"/><stop offset="0.11" stop-color="#de9785"/><stop offset="0.14" stop-color="#dd9583"/><stop offset="0.17" stop-color="#db9482"/><stop offset="0.19" stop-color="#da9280"/><stop offset="0.22" stop-color="#d7907e"/><stop offset="0.25" stop-color="#d58e7c"/><stop offset="0.28" stop-color="#d28b79"/><stop offset="0.31" stop-color="#cf8977"/><stop offset="0.33" stop-color="#c98473"/><stop offset="0.36" stop-color="#c17e6d"/><stop offset="0.39" stop-color="#bc7b6a"/><stop offset="0.42" stop-color="#b77868"/><stop offset="0.44" stop-color="#af7464"/><stop offset="0.47" stop-color="#a66f60"/><stop offset="0.5" stop-color="#9e6a5c"/><stop offset="0.53" stop-color="#976758"/><stop offset="0.56" stop-color="#8c6053"/><stop offset="0.58" stop-color="#815a4d"/><stop offset="0.61" stop-color="#755247"/><stop offset="0.64" stop-color="#694b40"/><stop offset="0.67" stop-color="#61453b"/><stop offset="0.69" stop-color="#5b4139"/><stop offset="0.72" stop-color="#533c34"/><stop offset="0.75" stop-color="#4b3730"/><stop offset="0.78" stop-color="#43312c"/><stop offset="0.81" stop-color="#3d2d28"/><stop offset="0.83" stop-color="#382925"/><stop offset="0.86" stop-color="#332522"/><stop offset="0.89" stop-color="#2d221e"/><stop offset="0.92" stop-color="#2a1f1c"/><stop offset="0.94" stop-color="#271d1a"/><stop offset="0.97" stop-color="#2d211d"/><stop offset="1" stop-color="#44302a"/></linearGradient>
<linearGradient id="g22" gradientUnits="userSpaceOnUse" x1="459.76" y1="262.32" x2="574.4" y2="341.27"><stop offset="0" stop-color="#d48d7b"/><stop offset="0.03" stop-color="#dd9583"/><stop offset="0.06" stop-color="#de9785"/><stop offset="0.08" stop-color="#de9785"/><stop offset="0.11" stop-color="#dd9684"/><stop offset="0.14" stop-color="#dc9482"/><stop offset="0.17" stop-color="#db9381"/><stop offset="0.19" stop-color="#d9917f"/><stop offset="0.22" stop-color="#d78f7d"/><stop offset="0.25" stop-color="#d48d7b"/><stop offset="0.28" stop-color="#d18b79"/><stop offset="0.31" stop-color="#cf8876"/><stop offset="0.33" stop-color="#c88472"/><stop offset="0.36" stop-color="#c07e6d"/><stop offset="0.39" stop-color="#bb7a6a"/><stop offset="0.42" stop-color="#b67767"/><stop offset="0.44" stop-color="#ae7363"/><stop offset="0.47" stop-color="#a66f5f"/><stop offset="0.5" stop-color="#9d6a5b"/><stop offset="0.53" stop-color="#966658"/><stop offset="0.56" stop-color="#8c6053"/><stop offset="0.58" stop-color="#81594d"/><stop offset="0.61" stop-color="#765247"/><stop offset="0.64" stop-color="#6a4b40"/><stop offset="0.67" stop-color="#61453c"/><stop offset="0.69" stop-color="#5c4239"/><stop offset="0.72" stop-color="#543d35"/><stop offset="0.75" stop-color="#4d3831"/><stop offset="0.78" stop-color="#45332d"/><stop offset="0.81" stop-color="#3f2e29"/><stop offset="0.83" stop-color="#3a2b26"/><stop offset="0.86" stop-color="#352723"/><stop offset="0.89" stop-color="#302320"/><stop offset="0.92" stop-color="#2b201d"/><stop offset="0.94" stop-color="#291e1b"/><stop offset="0.97" stop-color="#2f221e"/><stop offset="1" stop-color="#45312b"/></linearGradient>
<linearGradient id="g23" gradientUnits="userSpaceOnUse" x1="465.62" y1="253.39" x2="583.57" y2="327.32"><stop offset="0" stop-color="#d38c7a"/><stop offset="0.03" stop-color="#dc9482"/><stop offset="0.06" stop-color="#dd9583"/><stop offset="0.08" stop-color="#dd9583"/><stop offset="0.11" stop-color="#dc9583"/><stop offset="0.14" stop-color="#db9381"/><stop offset="0.17" stop-color="#da9280"/><stop offset="0.19" stop-color="#d8907e"/><stop offset="0.22" stop-color="#d68e7c"/><stop offset="0.25" stop-color="#d38c7a"/><stop offset="0.28" stop-color="#d18a78"/><stop offset="0.31" stop-color="#ce8876"/><stop offset="0.33" stop-color="#c78371"/><stop offset="0.36" stop-color="#bf7d6c"/><stop offset="0.39" stop-color="#bb7a69"/><stop offset="0.42" stop-color="#b57767"/><stop offset="0.44" stop-color="#ad7363"/><stop offset="0.47" stop-color="#a56e5f"/><stop offset="0.5" stop-color="#9c695a"/><stop offset="0.53" stop-color="#956557"/><stop offset="0.56" stop-color="#8b6052"/><stop offset="0.58" stop-color="#81594d"/><stop offset="0.61" stop-color="#765247"/><stop offset="0.64" stop-color="#6b4b41"/><stop offset="0.67" stop-color="#62463c"/><stop offset="0.69" stop-color="#5d4239"/><stop offset="0.72" stop-color="#553e35"/><stop offset="0.75" stop-color="#4e3932"/><stop offset="0.78" stop-color="#47342e"/><stop offset="0.81" stop-color="#402f2a"/><stop offset="0.83" stop-color="#3c2c27"/><stop offset="0.86" stop-color="#372824"/><stop offset="0.89" stop-color="#322521"/><stop offset="0.92" stop-color="#2d221e"/><stop offset="0.94" stop-color="#2b201d"/><stop offset="0.97" stop-color="#312320"/><stop offset="1" stop-color="#47322c"/></linearGradient>
<linearGradient id="g24" gradientUnits="userSpaceOnUse" x1="471.1" y1="244.22" x2="592.13" y2="312.99"><stop offset="0" stop-color="#d18b79"/><stop offset="0.03" stop-color="#db9381"/><stop offset="0.06" stop-color="#dc9482"/><stop offset="0.08" stop-color="#dc9482"/><stop offset="0.11" stop-color="#db9482"/><stop offset="0.14" stop-color="#da9280"/><stop offset="0.17" stop-color="#d9917f"/><stop offset="0.19" stop-color="#d7907e"/><stop offset="0.22" stop-color="#d58e7c"/><stop offset="0.25" stop-color="#d38c7a"/><stop offset="0.28" stop-color="#d08a78"/><stop offset="0.31" stop-color="#cd8775"/><stop offset="0.33" stop-color="#c68270"/><stop offset="0.36" stop-color="#bf7c6b"/><stop offset="0.39" stop-color="#ba7a69"/><stop offset="0.42" stop-color="#b47666"/><stop offset="0.44" stop-color="#ac7262"/><stop offset="0.47" stop-color="#a46d5e"/><stop offset="0.5" stop-color="#9b685a"/><stop offset="0.53" stop-color="#946557"/><stop offset="0.56" stop-color="#8b5f52"/><stop offset="0.58" stop-color="#81594d"/><stop offset="0.61" stop-color="#765347"/><stop offset="0.64" stop-color="#6c4c41"/><stop offset="0.67" stop-color="#63463c"/><stop offset="0.69" stop-color="#5d433a"/><stop offset="0.72" stop-color="#573e36"/><stop offset="0.75" stop-color="#503a32"/><stop offset="0.78" stop-color="#49352f"/><stop offset="0.81" stop-color="#42312b"/><stop offset="0.83" stop-color="#3d2d28"/><stop offset="0.86" stop-color="#392a26"/><stop offset="0.89" stop-color="#342723"/><stop offset="0.92" stop-color="#2f2320"/><stop offset="0.94" stop-color="#2d211e"/><stop offset="0.97" stop-color="#332521"/><stop offset="1" stop-color="#48332d"/></linearGradient>
<linearGradient id="g25" gradientUnits="userSpaceOnUse" x1="476.18" y1="234.82" x2="600.06" y2="298.3"><stop offset="0" stop-color="#d08977"/><stop offset="0.03" stop-color="#d9917f"/><stop offset="0.06" stop-color="#db9381"/><stop offset="0.08" stop-color="#db9381"/><stop offset="0.11" stop-color="#da9280"/><stop offset="0.14" stop-color="#d9917f"/><stop offset="0.17" stop-color="#d8907e"/><stop offset="0.19" stop-color="#d68f7d"/><stop offset="0.22" stop-color="#d48d7b"/><stop offset="0.25" stop-color="#d28b79"/><stop offset="0.28" stop-color="#cf8977"/><stop offset="0.31" stop-color="#cb8674"/><stop offset="0.33" stop-color="#c4816f"/><stop offset="0.36" stop-color="#be7c6b"/><stop offset="0.39" stop-color="#b97969"/><stop offset="0.42" stop-color="#b37666"/><stop offset="0.44" stop-color="#ab7162"/><stop offset="0.47" stop-color="#a26d5e"/><stop offset="0.5" stop-color="#9a6859"/><stop offset="0.53" stop-color="#936456"/><stop offset="0.56" stop-color="#8a5f51"/><stop offset="0.58" stop-color="#81594d"/><stop offset="0.61" stop-color="#775347"/><stop offset="0.64" stop-color="#6d4c42"/><stop offset="0.67" stop-color="#63473d"/><stop offset="0.69" stop-color="#5e433a"/><stop offset="0.72" stop-color="#583f37"/><stop offset="0.75" stop-color="#513b33"/><stop offset="0.78" stop-color="#4b3630"/><stop offset="0.81" stop-color="#44322c"/><stop offset="0.83" stop-color="#3f2f2a"/><stop offset="0.86" stop-color="#3b2c27"/><stop offset="0.89" stop-color="#372824"/><stop offset="0.92" stop-color="#322522"/><stop offset="0.94" stop-color="#2f2320"/><stop offset="0.97" stop-color="#352622"/><stop offset="1" stop-color="#4a342e"/></linearGradient>
<linearGradient id="g26" gradientUnits="userSpaceOnUse" x1="480.84" y1="225.21" x2="607.35" y2="283.29"><stop offset="0" stop-color="#ce8876"/><stop offset="0.03" stop-color="#d8907e"/><stop offset="0.06" stop-color="#d9917f"/><stop offset="0.08" stop-color="#d99280"/><stop offset="0.11" stop-color="#d9917f"/><stop offset="0.14" stop-color="#d8907e"/><stop offset="0.17" stop-color="#d78f7d"/><stop offset="0.19" stop-color="#d58e7c"/><stop offset="0.22" stop-color="#d38c7a"/><stop offset="0.25" stop-color="#d18a78"/><stop offset="0.28" stop-color="#cf8977"/><stop offset="0.31" stop-color="#c98573"/><stop offset="0.33" stop-color="#c3806e"/><stop offset="0.36" stop-color="#bd7b6a"/><stop offset="0.39" stop-color="#b87868"/><stop offset="0.42" stop-color="#b17565"/><stop offset="0.44" stop-color="#aa7061"/><stop offset="0.47" stop-color="#a16c5d"/><stop offset="0.5" stop-color="#986759"/><stop offset="0.53" stop-color="#926355"/><stop offset="0.56" stop-color="#895e51"/><stop offset="0.58" stop-color="#81594d"/><stop offset="0.61" stop-color="#775348"/><stop offset="0.64" stop-color="#6d4d42"/><stop offset="0.67" stop-color="#64473d"/><stop offset="0.69" stop-color="#5f443a"/><stop offset="0.72" stop-color="#594038"/><stop offset="0.75" stop-color="#533c34"/><stop offset="0.78" stop-color="#4d3831"/><stop offset="0.81" stop-color="#46332e"/><stop offset="0.83" stop-color="#41302b"/><stop offset="0.86" stop-color="#3d2d28"/><stop offset="0.89" stop-color="#392a26"/><stop offset="0.92" stop-color="#352723"/><stop offset="0.94" stop-color="#312521"/><stop offset="0.97" stop-color="#372824"/><stop offset="1" stop-color="#4b352f"/></linearGradient>
<linearGradient id="g27" gradientUnits="userSpaceOnUse" x1="485.09" y1="215.41" x2="613.98" y2="267.97"><stop offset="0" stop-color="#c98473"/><stop offset="0.03" stop-color="#d68e7c"/><stop offset="0.06" stop-color="#d8907e"/><stop offset="0.08" stop-color="#d8907e"/><stop offset="0.11" stop-color="#d8907e"/><stop offset="0.14" stop-color="#d78f7d"/><stop offset="0.17" stop-color="#d58e7c"/><stop offset="0.19" stop-color="#d48d7b"/><stop offset="0.22" stop-color="#d28b79"/><stop offset="0.25" stop-color="#d08a78"/><stop offset="0.28" stop-color="#ce8876"/><stop offset="0.31" stop-color="#c88372"/><stop offset="0.33" stop-color="#c17f6d"/><stop offset="0.36" stop-color="#bc7b6a"/><stop offset="0.39" stop-color="#b77868"/><stop offset="0.42" stop-color="#b07464"/><stop offset="0.44" stop-color="#a87060"/><stop offset="0.47" stop-color="#a06b5c"/><stop offset="0.5" stop-color="#976658"/><stop offset="0.53" stop-color="#916355"/><stop offset="0.56" stop-color="#895e51"/><stop offset="0.58" stop-color="#81594d"/><stop offset="0.61" stop-color="#785348"/><stop offset="0.64" stop-color="#6e4e43"/><stop offset="0.67" stop-color="#65483d"/><stop offset="0.69" stop-color="#60443b"/><stop offset="0.72" stop-color="#5a4138"/><stop offset="0.75" stop-color="#543d35"/><stop offset="0.78" stop-color="#4e3932"/><stop offset="0.81" stop-color="#48352f"/><stop offset="0.83" stop-color="#43322c"/><stop offset="0.86" stop-color="#3f2f2a"/><stop offset="0.89" stop-color="#3b2c27"/><stop offset="0.92" stop-color="#372925"/><stop offset="0.94" stop-color="#342623"/><stop offset="0.97" stop-color="#392a25"/><stop offset="1" stop-color="#4d3630"/></linearGradient>
<linearGradient id="g28" gradientUnits="userSpaceOnUse" x1="488.91" y1="205.43" x2="619.95" y2="252.38"><stop offset="0" stop-color="#c4816f"/><stop offset="0.03" stop-color="#d48d7b"/><stop offset="0.06" stop-color="#d68f7d"/><stop offset="0.08" stop-color="#d68f7d"/><stop offset="0.11" stop-color="#d68f7d"/><stop offset="0.14" stop-color="#d58e7c"/><stop offset="0.17" stop-color="#d48d7b"/><stop offset="0.19" stop-color="#d38c7a"/><stop offset="0.22" stop-color="#d18a78"/><stop offset="0.25" stop-color="#cf8977"/><stop offset="0.28" stop-color="#cb8674"/><stop offset="0.31" stop-color="#c68270"/><stop offset="0.33" stop-color="#c07d6c"/><stop offset="0.36" stop-color="#bb7a69"/><stop offset="0.39" stop-color="#b67767"/><stop offset="0.42" stop-color="#af7363"/><stop offset="0.44" stop-color="#a76f60"/><stop offset="0.47" stop-color="#9f6a5c"/><stop offset="0.5" stop-color="#966657"/><stop offset="0.53" stop-color="#906254"/><stop offset="0.56" stop-color="#885d50"/><stop offset="0.58" stop-color="#81594c"/><stop offset="0.61" stop-color="#785448"/><stop offset="0.64" stop-color="#6f4e43"/><stop offset="0.67" stop-color="#66483e"/><stop offset="0.69" stop-color="#60453b"/><stop offset="0.72" stop-color="#5c4239"/><stop offset="0.75" stop-color="#563e36"/><stop offset="0.78" stop-color="#503a33"/><stop offset="0.81" stop-color="#4a3630"/><stop offset="0.83" stop-color="#45332d"/><stop offset="0.86" stop-color="#42302b"/><stop offset="0.89" stop-color="#3e2e29"/><stop offset="0.92" stop-color="#3a2b26"/><stop offset="0.94" stop-color="#362824"/><stop offset="0.97" stop-color="#3c2b27"/><stop offset="1" stop-color="#4e3731"/></linearGradient>
<linearGradient id="g29" gradientUnits="userSpaceOnUse" x1="492.29" y1="195.3" x2="625.24" y2="236.55"><stop offset="0" stop-color="#bf7d6c"/><stop offset="0.03" stop-color="#d28b79"/><stop offset="0.06" stop-color="#d48d7b"/><stop offset="0.08" stop-color="#d58d7b"/><stop offset="0.11" stop-color="#d48d7b"/><stop offset="0.14" stop-color="#d48d7b"/><stop offset="0.17" stop-color="#d38c7a"/><stop offset="0.19" stop-color="#d18b79"/><stop offset="0.22" stop-color="#d08a78"/><stop offset="0.25" stop-color="#ce8876"/><stop offset="0.28" stop-color="#c98473"/><stop offset="0.31" stop-color="#c4806f"/><stop offset="0.33" stop-color="#be7c6b"/><stop offset="0.36" stop-color="#ba7969"/><stop offset="0.39" stop-color="#b57666"/><stop offset="0.42" stop-color="#ad7263"/><stop offset="0.44" stop-color="#a66e5f"/><stop offset="0.47" stop-color="#9e6a5b"/><stop offset="0.5" stop-color="#956557"/><stop offset="0.53" stop-color="#8f6154"/><stop offset="0.56" stop-color="#885d50"/><stop offset="0.58" stop-color="#81594c"/><stop offset="0.61" stop-color="#795448"/><stop offset="0.64" stop-color="#704f44"/><stop offset="0.67" stop-color="#68493f"/><stop offset="0.69" stop-color="#61453c"/><stop offset="0.72" stop-color="#5d4239"/><stop offset="0.75" stop-color="#583f37"/><stop offset="0.78" stop-color="#523b34"/><stop offset="0.81" stop-color="#4d3831"/><stop offset="0.83" stop-color="#47342e"/><stop offset="0.86" stop-color="#43322c"/><stop offset="0.89" stop-color="#402f2a"/><stop offset="0.92" stop-color="#3c2c28"/><stop offset="0.94" stop-color="#392a26"/><stop offset="0.97" stop-color="#3e2d29"/><stop offset="1" stop-color="#503832"/></linearGradient>
<linearGradient id="g30" gradientUnits="userSpaceOnUse" x1="495.23" y1="185.03" x2="629.84" y2="220.5"><stop offset="0" stop-color="#bb7a69"/><stop offset="0.03" stop-color="#d08a78"/><stop offset="0.06" stop-color="#d28b79"/><stop offset="0.08" stop-color="#d38c7a"/><stop offset="0.11" stop-color="#d38c7a"/><stop offset="0.14" stop-color="#d28b79"/><stop offset="0.17" stop-color="#d18b79"/><stop offset="0.19" stop-color="#d08a78"/><stop offset="0.22" stop-color="#cf8977"/><stop offset="0.25" stop-color="#cb8674"/><stop offset="0.28" stop-color="#c78371"/><stop offset="0.31" stop-color="#c27f6e"/><stop offset="0.33" stop-color="#bd7b6a"/><stop offset="0.36" stop-color="#b87968"/><stop offset="0.39" stop-color="#b37566"/><stop offset="0.42" stop-color="#ac7262"/><stop offset="0.44" stop-color="#a56d5e"/><stop offset="0.47" stop-color="#9d695a"/><stop offset="0.5" stop-color="#956456"/><stop offset="0.53" stop-color="#8e6153"/><stop offset="0.56" stop-color="#885d50"/><stop offset="0.58" stop-color="#81594c"/><stop offset="0.61" stop-color="#795449"/><stop offset="0.64" stop-color="#714f44"/><stop offset="0.67" stop-color="#694a40"/><stop offset="0.69" stop-color="#62463c"/><stop offset="0.72" stop-color="#5e433a"/><stop offset="0.75" stop-color="#594037"/><stop offset="0.78" stop-color="#543d35"/><stop offset="0.81" stop-color="#4f3932"/><stop offset="0.83" stop-color="#49362f"/><stop offset="0.86" stop-color="#45332d"/><stop offset="0.89" stop-color="#42312b"/><stop offset="0.92" stop-color="#3e2e29"/><stop offset="0.94" stop-color="#3b2c27"/><stop offset="0.97" stop-color="#402f2a"/><stop offset="1" stop-color="#513932"/></linearGradient>
<linearGradient id="g31" gradientUnits="userSpaceOnUse" x1="497.73" y1="174.65" x2="633.74" y2="204.27"><stop offset="0" stop-color="#b67767"/><stop offset="0.03" stop-color="#cd8776"/><stop offset="0.06" stop-color="#d08a78"/><stop offset="0.08" stop-color="#d18a78"/><stop offset="0.11" stop-color="#d18a78"/><stop offset="0.14" stop-color="#d18a78"/><stop offset="0.17" stop-color="#d08977"/><stop offset="0.19" stop-color="#cf8977"/><stop offset="0.22" stop-color="#cc8775"/><stop offset="0.25" stop-color="#c98472"/><stop offset="0.28" stop-color="#c4816f"/><stop offset="0.31" stop-color="#c07d6c"/><stop offset="0.33" stop-color="#bb7a6a"/><stop offset="0.36" stop-color="#b77867"/><stop offset="0.39" stop-color="#b17565"/><stop offset="0.42" stop-color="#ab7161"/><stop offset="0.44" stop-color="#a46d5e"/><stop offset="0.47" stop-color="#9c695a"/><stop offset="0.5" stop-color="#946456"/><stop offset="0.53" stop-color="#8e6153"/><stop offset="0.56" stop-color="#885d50"/><stop offset="0.58" stop-color="#81594d"/><stop offset="0.61" stop-color="#7a5549"/><stop offset="0.64" stop-color="#735045"/><stop offset="0.67" stop-color="#6b4b41"/><stop offset="0.69" stop-color="#63463d"/><stop offset="0.72" stop-color="#5f443a"/><stop offset="0.75" stop-color="#5a4138"/><stop offset="0.78" stop-color="#553e36"/><stop offset="0.81" stop-color="#503a33"/><stop offset="0.83" stop-color="#4b3731"/><stop offset="0.86" stop-color="#47342e"/><stop offset="0.89" stop-color="#43322c"/><stop offset="0.92" stop-color="#402f2a"/><stop offset="0.94" stop-color="#3d2d29"/><stop offset="0.97" stop-color="#42302b"/><stop offset="1" stop-color="#533b34"/></linearGradient>
<linearGradient id="gt" gradientUnits="userSpaceOnUse" x1="498.81" y1="169.42" x2="635.43" y2="196.1"><stop offset="0" stop-color="#b47666"/><stop offset="0.03" stop-color="#cb8574"/><stop offset="0.06" stop-color="#cf8977"/><stop offset="0.08" stop-color="#d08a78"/><stop offset="0.11" stop-color="#d08a78"/><stop offset="0.14" stop-color="#d08977"/><stop offset="0.17" stop-color="#cf8977"/><stop offset="0.19" stop-color="#ce8876"/><stop offset="0.22" stop-color="#cb8674"/><stop offset="0.25" stop-color="#c78371"/><stop offset="0.28" stop-color="#c3806e"/><stop offset="0.31" stop-color="#be7c6b"/><stop offset="0.33" stop-color="#ba7a69"/><stop offset="0.36" stop-color="#b67767"/><stop offset="0.39" stop-color="#b17464"/><stop offset="0.42" stop-color="#aa7061"/><stop offset="0.44" stop-color="#a36c5e"/><stop offset="0.47" stop-color="#9c685a"/><stop offset="0.5" stop-color="#946456"/><stop offset="0.53" stop-color="#8e6153"/><stop offset="0.56" stop-color="#885d50"/><stop offset="0.58" stop-color="#81594d"/><stop offset="0.61" stop-color="#7b5549"/><stop offset="0.64" stop-color="#735045"/><stop offset="0.67" stop-color="#6b4c41"/><stop offset="0.69" stop-color="#64473d"/><stop offset="0.72" stop-color="#5f443b"/><stop offset="0.75" stop-color="#5b4138"/><stop offset="0.78" stop-color="#563e36"/><stop offset="0.81" stop-color="#513b34"/><stop offset="0.83" stop-color="#4c3831"/><stop offset="0.86" stop-color="#47342f"/><stop offset="0.89" stop-color="#44322d"/><stop offset="0.92" stop-color="#41302b"/><stop offset="0.94" stop-color="#3e2e29"/><stop offset="0.97" stop-color="#43312c"/><stop offset="1" stop-color="#543b34"/></linearGradient>
</defs>
<rect x="0" y="0" width="673" height="649" fill="#343f4f"/>
<rect x="0" y="368" width="257" height="139" fill="url(#cyl)"/>
<g stroke-width="1.1">
<polyline fill="none" stroke="#7a8188" points="0,373.9 200,373.9 200,374.8 238,374.8 238,375.5 254,375.5"/>
<polyline fill="none" stroke="#7a8188" points="0,388.5 200,388.5 200,389.4 238,389.4 238,390.1 254,390.1"/>
<polyline fill="none" stroke="#7a8188" points="0,410.6 200,410.6 200,411.5 238,411.5 238,412.2 254,412.2"/>
<polyline fill="none" stroke="#858b92" points="0,437.6 200,437.6 200,438.5 238,438.5 238,439.2 254,439.2"/>
<polyline fill="none" stroke="#8e9398" points="0,464.6 200,464.6 200,465.5 238,465.5 238,466.2 254,466.2"/>
<polyline fill="none" stroke="#9a9ea2" points="0,486.6 200,486.6 200,487.5 238,487.5 238,488.2 254,488.2"/>
<polyline fill="none" stroke="#5a5e62" points="0,502.4 200,502.4 200,503.3 238,503.3 238,504 254,504"/>
<polyline fill="none" stroke="#a0a4a8" points="0,506.9 200,506.9 200,507.8 238,507.8 238,508.5 254,508.5"/>
<line x1="183.3" y1="370" x2="183.3" y2="505" stroke="#8a8f94"/>
</g>
<g fill="#808284">
<rect x="180.8" y="366" width="5" height="5"/>
<rect x="180.8" y="371.4" width="5" height="5"/>
<rect x="180.8" y="386" width="5" height="5"/>
<rect x="180.8" y="408.1" width="5" height="5"/>
<rect x="180.8" y="435.1" width="5" height="5"/>
<rect x="180.8" y="462.1" width="5" height="5"/>
<rect x="180.8" y="484.1" width="5" height="5"/>
<rect x="180.8" y="499.9" width="5" height="5"/>
<rect x="180.8" y="504.4" width="5" height="5"/>
</g>
<g>
<polygon points="255.05,368.6 267.2,368.35 273.6,509 254.51,509.4" fill="url(#g0)"/>
<polygon points="265.7,368.41 277.83,367.63 290.29,507.88 271.24,509.1" fill="url(#g1)"/>
<polygon points="276.33,367.76 288.41,366.46 306.92,506.04 287.93,508.08" fill="url(#g2)"/>
<polygon points="286.92,366.65 298.93,364.83 323.45,503.48 304.57,506.34" fill="url(#g3)"/>
<polygon points="297.45,365.09 309.38,362.75 339.85,500.22 321.11,503.89" fill="url(#g4)"/>
<polygon points="307.9,363.08 319.72,360.23 356.1,496.24 337.54,500.72" fill="url(#g5)"/>
<polygon points="318.26,360.61 329.94,357.25 372.16,491.57 353.81,496.85" fill="url(#g6)"/>
<polygon points="328.5,357.7 340.03,353.84 388.01,486.22 369.9,492.28" fill="url(#g7)"/>
<polygon points="338.61,354.35 349.96,350 403.61,480.18 385.78,487.02" fill="url(#g8)"/>
<polygon points="348.56,350.57 359.71,345.73 418.93,473.47 401.41,481.07" fill="url(#g9)"/>
<polygon points="358.34,346.36 369.27,341.04 433.95,466.11 416.78,474.46" fill="url(#g10)"/>
<polygon points="367.93,341.73 378.62,335.95 448.64,458.11 431.84,467.19" fill="url(#g11)"/>
<polygon points="377.31,336.7 387.75,330.46 462.97,449.48 446.58,459.28" fill="url(#g12)"/>
<polygon points="386.47,331.26 396.62,324.58 476.91,440.24 460.96,450.74" fill="url(#g13)"/>
<polygon points="395.38,325.43 405.23,318.32 490.44,430.41 474.96,441.58" fill="url(#g14)"/>
<polygon points="404.03,319.23 413.57,311.69 503.54,420 488.55,431.83" fill="url(#g15)"/>
<polygon points="412.41,312.65 421.61,304.71 516.17,409.04 501.71,421.51" fill="url(#g16)"/>
<polygon points="420.49,305.72 429.34,297.39 528.32,397.54 514.41,410.62" fill="url(#g17)"/>
<polygon points="428.27,298.45 436.75,289.75 539.96,385.53 526.63,399.2" fill="url(#g18)"/>
<polygon points="435.73,290.85 443.83,281.79 551.07,373.02 538.34,387.26" fill="url(#g19)"/>
<polygon points="442.85,282.93 450.55,273.53 561.63,360.05 549.53,374.82" fill="url(#g20)"/>
<polygon points="449.62,274.72 456.91,264.99 571.62,346.64 560.17,361.91" fill="url(#g21)"/>
<polygon points="456.03,266.22 462.89,256.19 581.02,332.8 570.24,348.56" fill="url(#g22)"/>
<polygon points="462.07,257.45 468.49,247.13 589.82,318.58 579.73,334.79" fill="url(#g23)"/>
<polygon points="467.73,248.43 473.7,237.84 598,303.98 588.61,320.61" fill="url(#g24)"/>
<polygon points="472.99,239.17 478.5,228.34 605.53,289.05 596.88,306.07" fill="url(#g25)"/>
<polygon points="477.84,229.69 482.88,218.63 612.42,273.81 604.51,291.18" fill="url(#g26)"/>
<polygon points="482.28,220.02 486.84,208.75 618.64,258.28 611.48,275.98" fill="url(#g27)"/>
<polygon points="486.3,210.16 490.37,198.7 624.18,242.5 617.8,260.49" fill="url(#g28)"/>
<polygon points="489.89,200.13 493.46,188.52 629.04,226.49 623.44,244.75" fill="url(#g29)"/>
<polygon points="493.05,189.96 496.11,178.2 633.2,210.29 628.4,228.77" fill="url(#g30)"/>
<polygon points="495.76,179.67 498.03,169.26 636.22,196.25 632.66,212.59" fill="url(#g31)"/>
<polygon points="498.71,169.91 539.54,-26.39 676.16,0.29 635.33,196.59" fill="url(#gt)"/>
</g>
<g stroke="#4b576a" stroke-width="1">
<line x1="234.5" y1="34" x2="234.5" y2="646"/>
<line x1="483.5" y1="34" x2="483.5" y2="646"/>
<line x1="0" y1="252.5" x2="673" y2="252.5"/>
<line x1="0" y1="501.5" x2="673" y2="501.5"/>
</g>
<g fill="none" stroke="#e01818" stroke-width="0.95" stroke-linejoin="round">
<polyline points="255.05,369.4 255.03,374.7 254.97,389.78 254.89,412.36 254.78,439 254.68,465.63 254.59,488.21 254.54,503.3 254.52,508.6" stroke-width="2.2"/>
<polyline points="303.59,364.78 304.61,369.98 307.51,384.78 311.85,406.94 316.98,433.08 322.1,459.22 326.44,481.38 329.34,496.18 330.36,501.38"/>
<polyline points="350.28,350.73 352.3,355.63 358.05,369.58 366.65,390.46 376.8,415.08 386.95,439.71 395.55,460.58 401.3,474.53 403.32,479.43"/>
<polyline points="393.3,327.8 396.24,332.21 404.62,344.76 417.15,363.54 431.93,385.7 446.71,407.86 459.25,426.64 467.62,439.19 470.56,443.6"/>
<polyline points="431,296.88 434.75,300.62 445.42,311.29 461.39,327.25 480.23,346.07 499.07,364.9 515.04,380.86 525.72,391.53 529.46,395.27"/>
<polyline points="461.9,259.16 466.31,262.1 478.86,270.46 497.65,282.98 519.82,297.75 541.99,312.51 560.78,325.03 573.34,333.4 577.75,336.33"/>
<polyline points="484.8,216.12 489.7,218.13 503.65,223.87 524.53,232.46 549.17,242.59 573.8,252.73 594.68,261.32 608.63,267.06 613.53,269.07"/>
<polyline points="498.81,169.42 504.01,170.43 518.82,173.33 540.98,177.65 567.12,182.76 593.26,187.86 615.43,192.19 630.23,195.08 635.43,196.1"/>
<polyline points="255.05,369.4 303.59,364.78 350.28,350.73 393.3,327.8 431,296.88 461.9,259.16 484.8,216.12 498.81,169.42 539.54,-26.39"/>
<polyline points="255.03,374.7 304.61,369.98 352.3,355.63 396.24,332.21 434.75,300.62 466.31,262.1 489.7,218.13 504.01,170.43 544.74,-25.38"/>
<polyline points="254.97,389.78 307.51,384.78 358.05,369.58 404.62,344.76 445.42,311.29 478.86,270.46 503.65,223.87 518.82,173.33 559.55,-22.48"/>
<polyline points="254.89,412.36 311.85,406.94 366.65,390.46 417.15,363.54 461.39,327.25 497.65,282.98 524.53,232.46 540.98,177.65 581.71,-18.16"/>
<polyline points="254.78,439 316.98,433.08 376.8,415.08 431.93,385.7 480.23,346.07 519.82,297.75 549.17,242.59 567.12,182.76 607.85,-13.05"/>
<polyline points="254.68,465.63 322.1,459.22 386.95,439.71 446.71,407.86 499.07,364.9 541.99,312.51 573.8,252.73 593.26,187.86 633.99,-7.95"/>
<polyline points="254.59,488.21 326.44,481.38 395.55,460.58 459.25,426.64 515.04,380.86 560.78,325.03 594.68,261.32 615.43,192.19 656.15,-3.62"/>
<polyline points="254.54,503.3 329.34,496.18 401.3,474.53 467.62,439.19 525.72,391.53 573.34,333.4 608.63,267.06 630.23,195.08 670.96,-0.73"/>
<polyline points="254.52,508.6 330.36,501.38 403.32,479.43 470.56,443.6 529.46,395.27 577.75,336.33 613.53,269.07 635.43,196.1 676.16,0.29"/>
</g>
<g fill="#ff1414">
<rect x="252.25" y="366.6" width="5.6" height="5.6"/>
<rect x="252.23" y="371.9" width="5.6" height="5.6"/>
<rect x="252.17" y="386.98" width="5.6" height="5.6"/>
<rect x="252.09" y="409.56" width="5.6" height="5.6"/>
<rect x="251.98" y="436.2" width="5.6" height="5.6"/>
<rect x="251.88" y="462.83" width="5.6" height="5.6"/>
<rect x="251.79" y="485.41" width="5.6" height="5.6"/>
<rect x="251.74" y="500.5" width="5.6" height="5.6"/>
<rect x="251.72" y="505.8" width="5.6" height="5.6"/>
<rect x="301.19" y="362.38" width="4.8" height="4.8"/>
<rect x="302.21" y="367.58" width="4.8" height="4.8"/>
<rect x="305.11" y="382.38" width="4.8" height="4.8"/>
<rect x="309.45" y="404.54" width="4.8" height="4.8"/>
<rect x="314.58" y="430.68" width="4.8" height="4.8"/>
<rect x="319.7" y="456.82" width="4.8" height="4.8"/>
<rect x="324.04" y="478.98" width="4.8" height="4.8"/>
<rect x="326.94" y="493.78" width="4.8" height="4.8"/>
<rect x="327.96" y="498.98" width="4.8" height="4.8"/>
<rect x="347.88" y="348.33" width="4.8" height="4.8"/>
<rect x="349.9" y="353.23" width="4.8" height="4.8"/>
<rect x="355.65" y="367.18" width="4.8" height="4.8"/>
<rect x="364.25" y="388.06" width="4.8" height="4.8"/>
<rect x="374.4" y="412.68" width="4.8" height="4.8"/>
<rect x="384.55" y="437.31" width="4.8" height="4.8"/>
<rect x="393.15" y="458.18" width="4.8" height="4.8"/>
<rect x="398.9" y="472.13" width="4.8" height="4.8"/>
<rect x="400.92" y="477.03" width="4.8" height="4.8"/>
<rect x="390.9" y="325.4" width="4.8" height="4.8"/>
<rect x="393.84" y="329.81" width="4.8" height="4.8"/>
<rect x="402.22" y="342.36" width="4.8" height="4.8"/>
<rect x="414.75" y="361.14" width="4.8" height="4.8"/>
<rect x="429.53" y="383.3" width="4.8" height="4.8"/>
<rect x="444.31" y="405.46" width="4.8" height="4.8"/>
<rect x="456.85" y="424.24" width="4.8" height="4.8"/>
<rect x="465.22" y="436.79" width="4.8" height="4.8"/>
<rect x="468.16" y="441.2" width="4.8" height="4.8"/>
<rect x="428.6" y="294.48" width="4.8" height="4.8"/>
<rect x="432.35" y="298.22" width="4.8" height="4.8"/>
<rect x="443.02" y="308.89" width="4.8" height="4.8"/>
<rect x="458.99" y="324.85" width="4.8" height="4.8"/>
<rect x="477.83" y="343.67" width="4.8" height="4.8"/>
<rect x="496.67" y="362.5" width="4.8" height="4.8"/>
<rect x="512.64" y="378.46" width="4.8" height="4.8"/>
<rect x="523.32" y="389.13" width="4.8" height="4.8"/>
<rect x="527.06" y="392.87" width="4.8" height="4.8"/>
<rect x="459.5" y="256.76" width="4.8" height="4.8"/>
<rect x="463.91" y="259.7" width="4.8" height="4.8"/>
<rect x="476.46" y="268.06" width="4.8" height="4.8"/>
<rect x="495.25" y="280.58" width="4.8" height="4.8"/>
<rect x="517.42" y="295.35" width="4.8" height="4.8"/>
<rect x="539.59" y="310.11" width="4.8" height="4.8"/>
<rect x="558.38" y="322.63" width="4.8" height="4.8"/>
<rect x="570.94" y="331" width="4.8" height="4.8"/>
<rect x="575.35" y="333.93" width="4.8" height="4.8"/>
<rect x="482.4" y="213.72" width="4.8" height="4.8"/>
<rect x="487.3" y="215.73" width="4.8" height="4.8"/>
<rect x="501.25" y="221.47" width="4.8" height="4.8"/>
<rect x="522.13" y="230.06" width="4.8" height="4.8"/>
<rect x="546.77" y="240.19" width="4.8" height="4.8"/>
<rect x="571.4" y="250.33" width="4.8" height="4.8"/>
<rect x="592.28" y="258.92" width="4.8" height="4.8"/>
<rect x="606.23" y="264.66" width="4.8" height="4.8"/>
<rect x="611.13" y="266.67" width="4.8" height="4.8"/>
<rect x="496.41" y="167.02" width="4.8" height="4.8"/>
<rect x="501.61" y="168.03" width="4.8" height="4.8"/>
<rect x="516.42" y="170.93" width="4.8" height="4.8"/>
<rect x="538.58" y="175.25" width="4.8" height="4.8"/>
<rect x="564.72" y="180.36" width="4.8" height="4.8"/>
<rect x="590.86" y="185.46" width="4.8" height="4.8"/>
<rect x="613.03" y="189.79" width="4.8" height="4.8"/>
<rect x="627.83" y="192.68" width="4.8" height="4.8"/>
<rect x="633.03" y="193.7" width="4.8" height="4.8"/>
</g>
<rect x="0" y="0" width="673" height="7" fill="#5a9399"/>
<rect x="0" y="7" width="673" height="1" fill="#08262e"/>
<rect x="0" y="8" width="673" height="1" fill="#8cc0c6"/>
<rect x="0" y="9" width="673" height="23" fill="#053c47"/><rect x="0" y="9" width="673" height="1" fill="#032e38"/>
<rect x="0" y="32" width="673" height="1" fill="#000000"/>
<rect x="0" y="33" width="673" height="1" fill="#e6dfb2"/>
<rect x="0" y="646" width="673" height="1" fill="#2e3420"/><rect x="0" y="647" width="673" height="1" fill="#d6d6b6"/>
<rect x="0" y="648" width="673" height="1" fill="#000"/>
<text class="t" x="-15.4" y="25" font-size="14" fill="#e4ecec">Back of Doc2</text>
<text class="t" x="-2.2" y="50" font-size="10.2" fill="#d0d4da">705.2%</text>

<!-- top strip blobs -->
<g>
<ellipse cx="10" cy="0" rx="6.5" ry="2.2" fill="#1a2a2c"/>
<ellipse cx="34.5" cy="0" rx="2.5" ry="1.6" fill="#243a3c"/>
<ellipse cx="45" cy="0" rx="2.5" ry="1.6" fill="#243a3c"/>
<rect x="71" y="0" width="3.5" height="1.2" fill="#e8f0f0"/>
<ellipse cx="166" cy="0" rx="4" ry="1.2" fill="#3a5658"/>
<ellipse cx="235" cy="0" rx="4" ry="1.6" fill="#243a3c"/>
<ellipse cx="265" cy="0" rx="3.3" ry="1.6" fill="#243a3c"/>
<rect x="292.5" y="0" width="10.5" height="2" fill="#0a1010"/>
<rect x="323" y="0" width="14" height="1.6" fill="#2a4446"/>
<ellipse cx="363" cy="0" rx="3" ry="1.6" fill="#2a4446"/>
<path d="M390 0h12v6l-3 -1.5l-4 -2.5l-5 -1z" fill="#c8a284" stroke="#3a2c22" stroke-width="0.8"/>
<ellipse cx="424" cy="0" rx="5" ry="1.8" fill="#3a4a48"/>
<path d="M479 0h18v4.5l-2 1.5l-5 -2.5l-4 1.5l-6 -3z" fill="#c8a284" stroke="#3a2c22" stroke-width="0.9"/>
<path d="M510 0h13v6l-2 0l-10 -5.5z" fill="#d8b49a" stroke="#3a2c22" stroke-width="0.9"/>
<path d="M544 0h19v2.2q0 1 -1.5 1h-16q-1.5 0 -1.5 -1z" fill="#3c3028"/>
<path d="M578 0h11v5.5l-2 0.5l-9 -5z" fill="#d8b49a" stroke="#3a2c22" stroke-width="0.8"/>
</g>
<g fill="#ffffff" stroke="#ffffff" stroke-width="0.6">
<path d="M18 1.3l5.2 2.5l-5.2 2.5z"/>
<path d="M50 1.3l5.2 2.5l-5.2 2.5z"/>
<path d="M178.5 1.3l5 2.5l-5 2.5z"/>
<path d="M434.5 1.3l5 2.5l-5 2.5z"/>
<path d="M561.7 1.3l4.8 2.5l-4.8 2.5z"/>
<path d="M594 1.3l4.8 2.5l-4.8 2.5z"/>
</g>
<!-- cube icons -->
<g fill="none" stroke="#d4e4e4" stroke-width="1.1" stroke-linejoin="round">
<path d="M488.3 14.8L496.1 12.4L503.9 14.5L503.6 21.9L496.4 27.3L489.3 22.2Z M496.1 12.4V19.5L489.3 22.2 M496.1 19.5L503.6 21.9 M500 13.4V20.7 M496.1 16L503.7 18.2"/>
<path d="M508.3 14.8L516.1 12.4L523.9 14.5L523.6 21.9L516.4 27.3L509.3 22.2Z M516.1 12.4V19.5L509.3 22.2 M516.1 19.5L523.6 21.9 M512.2 13.6V20.8 M516.1 16L508.8 18.5"/>
<path d="M527.9 14.8L536 12.2L543.8 14.8L543.1 23L535.7 27.8L529 23Z M536 12.2V19.7L529 23 M536 19.7L543.1 23 M532.5 21.3L539.4 25.4 M539.5 21.3L532.4 25.4"/>
</g>
<circle cx="562.9" cy="20" r="7.6" fill="none" stroke="#7aa4a8" stroke-width="1.1"/>
<path d="M562.9 15.2L559.3 21.9H561.9V25.6H563.9V21.9H566.5Z" fill="#94b4b6"/>
<g fill="none" stroke="#5e9298" stroke-width="1.3" stroke-dasharray="3 2.2">
<circle cx="583.8" cy="19.8" r="6.8"/>
</g>
<path d="M581.5 17.5L583.8 20L586.1 17.5M583.8 20V22.5" fill="none" stroke="#5e9298" stroke-width="1.2"/>
<path d="M580.8 26.3H586.8L583.8 28.8Z" fill="#6a9ca0"/>
<path d="M597.1 15.6L605 12.2L612.7 15.6L611.6 24.1L605 28.2L598.3 24.1Z M597.1 15.6L605 18.9L612.7 15.6 M605 18.9V28.2" fill="none" stroke="#86acb0" stroke-width="1.2" stroke-linejoin="round"/>
<path d="M617.9 15.1L625.9 11.75L634 15.1L625.9 18.6Z" fill="#8aaeb2"/>
<path d="M617.9 15.1L625.9 18.6V28.1L619.25 24.5Z" fill="#7a9ea2"/>
<path d="M634 15.1L625.9 18.6V28.1L633.1 24.5Z" fill="#6a9094"/>
<defs>
<radialGradient id="sph" cx="0.42" cy="0.4" r="0.65">
<stop offset="0" stop-color="#f4f6ee"/><stop offset="0.55" stop-color="#d4dacc"/><stop offset="1" stop-color="#8e9a90"/>
</radialGradient>
<radialGradient id="glow" cx="0.5" cy="0.5" r="0.5">
<stop offset="0.6" stop-color="#6a8a80" stop-opacity="0.5"/><stop offset="1" stop-color="#053c47" stop-opacity="0"/>
</radialGradient>
<radialGradient id="sph2" cx="0.45" cy="0.45" r="0.6">
<stop offset="0" stop-color="#8aaab0"/><stop offset="1" stop-color="#4e7a80"/>
</radialGradient>
<radialGradient id="wglow" cx="0.5" cy="0.5" r="0.5">
<stop offset="0.5" stop-color="#c8d8a8" stop-opacity="0.45"/><stop offset="1" stop-color="#053c47" stop-opacity="0"/>
</radialGradient>
</defs>
<circle cx="646.9" cy="20" r="10.5" fill="url(#glow)"/>
<circle cx="646.9" cy="20" r="8" fill="url(#sph)"/>
<circle cx="668.6" cy="20" r="8" fill="url(#sph2)"/>
<path d="M662 16q5 3 12 -1M661 21q6 3 13 -1M663 25.5q5 1 10 -2" fill="none" stroke="#9ab8bc" stroke-width="1" opacity="0.7"/>
<rect x="397" y="12" width="17" height="17" fill="url(#wglow)"/>
<rect x="400" y="15" width="11" height="11" fill="#ffffff"/>
<g fill="#8aa8aa">
<rect x="416" y="15" width="11" height="4.6"/><rect x="416" y="21.3" width="11" height="4.6"/>
<rect x="432" y="15" width="4.7" height="4.6"/><rect x="438.3" y="15" width="4.7" height="4.6"/><rect x="432" y="21.3" width="11" height="4.6"/>
<rect x="448" y="15" width="4.7" height="4.6"/><rect x="454.3" y="15" width="4.7" height="4.6"/><rect x="448" y="21.3" width="4.7" height="4.6"/><rect x="454.3" y="21.3" width="4.7" height="4.6"/>
<path d="M464 15h5v6.3h6v4.6h-11z"/><rect x="470.3" y="15" width="4.7" height="4.6"/>
</g>
</svg>
</body></html>
